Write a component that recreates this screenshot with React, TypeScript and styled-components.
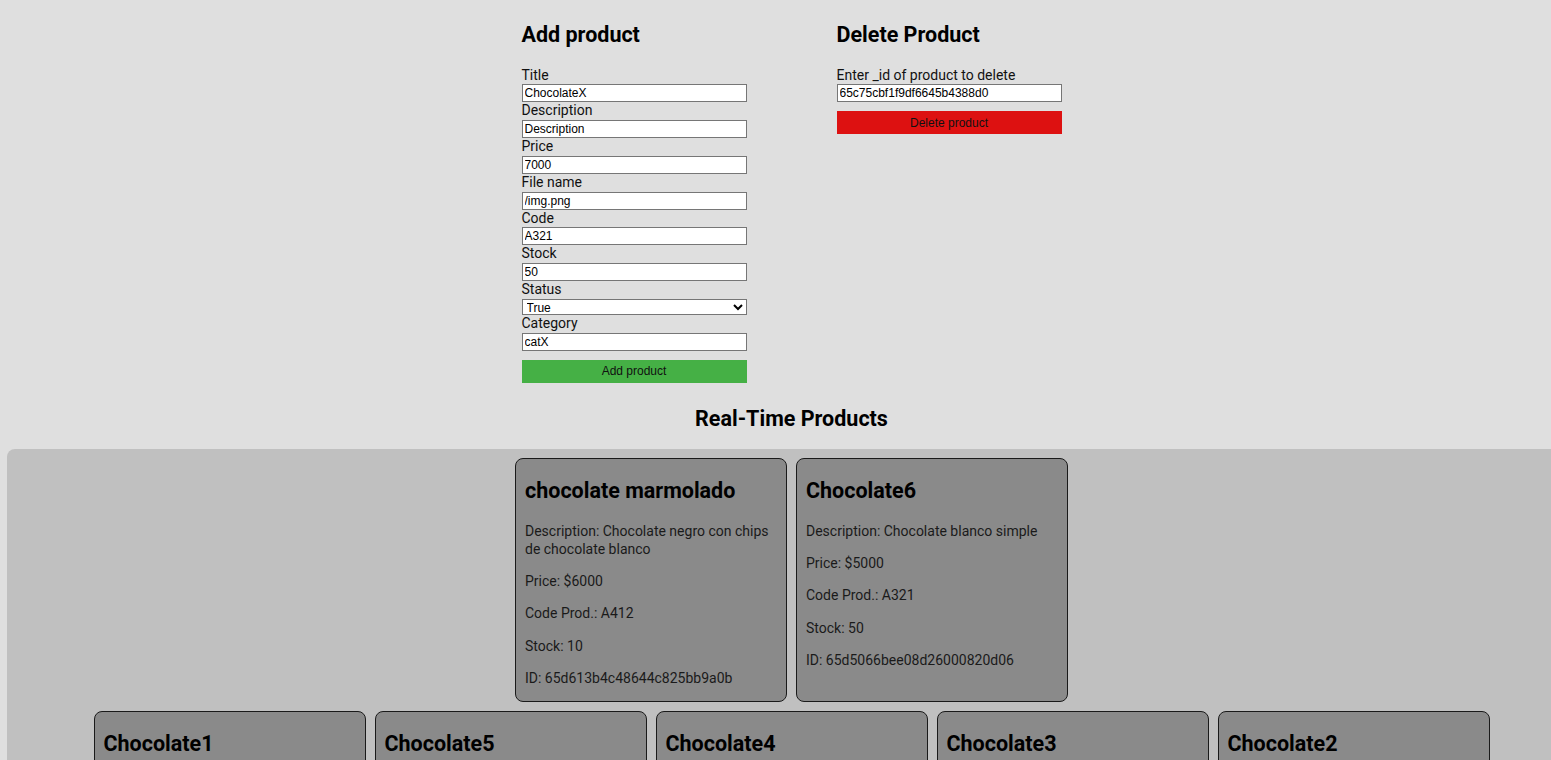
import React from 'react';
import styled, { createGlobalStyle } from 'styled-components';

const GlobalStyle = createGlobalStyle`
  html, body {
    margin: 0;
    padding: 0;
    background: #dfdfdf;
    overflow-x: hidden;
  }
  body {
    font-family: Roboto, 'Liberation Sans', sans-serif;
    color: #111;
  }
`;

const products = [
  {
    _id: '65d5066bee08d26000820d01',
    title: 'Chocolate1',
    description: 'Chocolate con leche clasico',
    price: 3000,
    code: 'A101',
    stock: 20,
  },
  {
    _id: '65d5066bee08d26000820d05',
    title: 'Chocolate5',
    description: 'Chocolate amargo 70%',
    price: 4500,
    code: 'A105',
    stock: 15,
  },
  {
    _id: '65d5066bee08d26000820d04',
    title: 'Chocolate4',
    description: 'Chocolate con almendras',
    price: 4000,
    code: 'A104',
    stock: 30,
  },
  {
    _id: '65d5066bee08d26000820d03',
    title: 'Chocolate3',
    description: 'Chocolate con mani',
    price: 3500,
    code: 'A103',
    stock: 25,
  },
  {
    _id: '65d5066bee08d26000820d02',
    title: 'Chocolate2',
    description: 'Chocolate semiamargo',
    price: 3200,
    code: 'A102',
    stock: 40,
  },
  {
    _id: '65d613b4c48644c825bb9a0b',
    title: 'chocolate marmolado',
    description: 'Chocolate negro con chips de chocolate blanco',
    price: 6000,
    code: 'A412',
    stock: 10,
  },
  {
    _id: '65d5066bee08d26000820d06',
    title: 'Chocolate6',
    description: 'Chocolate blanco simple',
    price: 5000,
    code: 'A321',
    stock: 50,
  },
];

const fields = [
  { label: 'Title', value: 'ChocolateX' },
  { label: 'Description', value: 'Description' },
  { label: 'Price', value: '7000' },
  { label: 'File name', value: '/img.png' },
  { label: 'Code', value: 'A321' },
  { label: 'Stock', value: '50' },
];

export default function App() {
  return (
    <>
      <GlobalStyle />
      <Page>
        <FormsRow>
          <FormBox>
            <Heading>Add product</Heading>
            {fields.map((f) => (
              <Field key={f.label}>
                <Label>{f.label}</Label>
                <Input defaultValue={f.value} />
              </Field>
            ))}
            <Field>
              <Label>Status</Label>
              <Select defaultValue="true">
                <option value="true">True</option>
                <option value="false">False</option>
              </Select>
            </Field>
            <Field>
              <Label>Category</Label>
              <Input defaultValue="catX" />
            </Field>
            <ActionButton $tone="add">Add product</ActionButton>
          </FormBox>
          <FormBox>
            <Heading>Delete Product</Heading>
            <Field>
              <Label>Enter _id of product to delete</Label>
              <Input defaultValue="65c75cbf1f9df6645b4388d0" />
            </Field>
            <ActionButton $tone="delete">Delete product</ActionButton>
          </FormBox>
        </FormsRow>
        <Heading as="h2" $center>
          Real-Time Products
        </Heading>
        <ProductList>
          {products.map((p) => (
            <Card key={p._id}>
              <CardTitle>{p.title}</CardTitle>
              <CardText>Description: {p.description}</CardText>
              <CardText>Price: ${p.price}</CardText>
              <CardText>Code Prod.: {p.code}</CardText>
              <CardText>Stock: {p.stock}</CardText>
              <CardText>ID: {p._id}</CardText>
            </Card>
          ))}
        </ProductList>
      </Page>
    </>
  );
}

const Page = styled.div`
  width: 1583px;
  min-height: 100vh;
  background: #dfdfdf;
`;

const FormsRow = styled.div`
  display: flex;
  justify-content: center;
  gap: 90px;
`;

const FormBox = styled.form`
  width: 225px;
  display: flex;
  flex-direction: column;
`;

const Heading = styled.h2<{ $center?: boolean }>`
  margin: ${(p) => (p.$center ? '23px 0 17px' : '22px 0 18.5px')};
  font-size: 21.5px;
  line-height: 26px;
  font-weight: 700;
  color: #000;
  text-align: ${(p) => (p.$center ? 'center' : 'left')};
`;

const Field = styled.div`
  display: flex;
  flex-direction: column;
`;

const Label = styled.label`
  font-size: 14px;
  line-height: 17.8px;
  color: #111;
`;

const Input = styled.input`
  box-sizing: border-box;
  width: 100%;
  height: 18px;
  margin: 0;
  padding: 0 2px;
  border: 1px solid #767676;
  border-radius: 0;
  background: #fff;
  font-family: 'Liberation Sans', Arial, sans-serif;
  font-size: 12px;
  color: #000;
  outline: none;
`;

const Select = styled.select`
  box-sizing: border-box;
  width: 100%;
  height: 16px;
  margin: 0;
  padding: 0;
  border: 1px solid #767676;
  border-radius: 0;
  background: #fff;
  font-family: 'Liberation Sans', Arial, sans-serif;
  font-size: 12px;
  line-height: 14px;
  color: #000;
`;

const ActionButton = styled.button<{ $tone: 'add' | 'delete' }>`
  margin-top: 9px;
  height: 23px;
  width: 100%;
  border: none;
  padding: 0;
  cursor: pointer;
  font-family: 'Liberation Sans', Arial, sans-serif;
  font-size: 12px;
  color: #111;
  background: ${(p) => (p.$tone === 'add' ? '#45b045' : '#dd1111')};
`;

const ProductList = styled.div`
  margin: 0 7px;
  padding: 9px 0;
  display: flex;
  flex-wrap: wrap-reverse;
  justify-content: center;
  gap: 9px;
  background: #c0c0c0;
  border-radius: 8px;
`;

const Card = styled.div`
  box-sizing: border-box;
  width: 272px;
  padding: 0 9px;
  background: #8a8a8a;
  border: 1px solid #1a1a1a;
  border-radius: 8px;
`;

const CardTitle = styled.h3`
  margin: 19px 0 19px;
  font-size: 21.5px;
  line-height: normal;
  font-weight: 700;
  color: #000;
`;

const CardText = styled.p`
  margin: 14.25px 0;
  font-size: 14px;
  line-height: 18px;
  color: #1a1a1a;
`;
